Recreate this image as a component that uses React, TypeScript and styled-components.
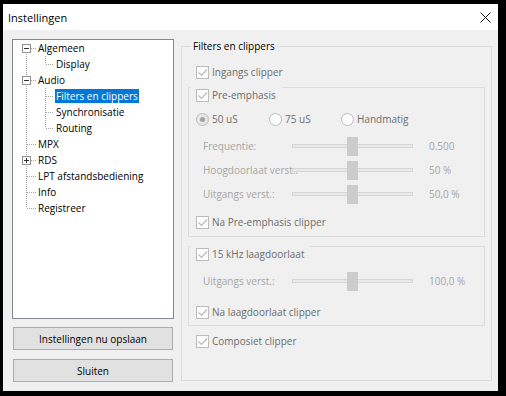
import { FC } from 'react';
import styled, { createGlobalStyle } from 'styled-components';

const Global = createGlobalStyle`
  html, body {
    margin: 0;
    padding: 0;
    background: #000;
  }
  body {
    width: 506px;
    height: 396px;
    overflow: hidden;
    font-family: "Open Sans", "Noto Sans", sans-serif;
    font-size: 10px;
  }
  * { box-sizing: border-box; }
`;

type Node = {
  label: string;
  level: 0 | 1;
  exp?: 'minus' | 'plus';
  first?: boolean;
  last?: boolean;
  lastChild?: boolean;
  selected?: boolean;
};

const tree: Node[] = [
  { label: 'Algemeen', level: 0, exp: 'minus', first: true },
  { label: 'Display', level: 1, lastChild: true },
  { label: 'Audio', level: 0, exp: 'minus' },
  { label: 'Filters en clippers', level: 1, selected: true },
  { label: 'Synchronisatie', level: 1 },
  { label: 'Routing', level: 1, lastChild: true },
  { label: 'MPX', level: 0 },
  { label: 'RDS', level: 0, exp: 'plus' },
  { label: 'LPT afstandsbediening', level: 0 },
  { label: 'Info', level: 0 },
  { label: 'Registreer', level: 0, last: true },
];

const dot = { stroke: '#a0a0a0', strokeWidth: 1, strokeDasharray: '1 1' };

const Connector: FC<{ n: Node }> = ({ n }) => {
  const w = n.level ? 41 : 23;
  return (
    <svg width={w} height={16} style={{ flex: 'none' }}>
      {n.level === 0 ? (
        <>
          <line x1={13.5} y1={n.first ? 8 : 0} x2={13.5} y2={n.last ? 8 : 16} {...dot} />
          <line x1={14} y1={8.5} x2={23} y2={8.5} {...dot} />
        </>
      ) : (
        <>
          <line x1={13.5} y1={0} x2={13.5} y2={16} {...dot} />
          <line x1={32.5} y1={0} x2={32.5} y2={n.lastChild ? 8 : 16} {...dot} />
          <line x1={33} y1={8.5} x2={41} y2={8.5} {...dot} />
        </>
      )}
      {n.exp && (
        <>
          <rect x={9.5} y={4.5} width={8} height={8} fill="#fff" stroke="#919191" />
          <line x1={11} y1={8.5} x2={16} y2={8.5} stroke="#333" />
          {n.exp === 'plus' && <line x1={13.5} y1={6} x2={13.5} y2={11} stroke="#333" />}
        </>
      )}
    </svg>
  );
};

const Slider: FC<{ label: string; value: string }> = ({ label, value }) => (
  <SliderRow>
    <SliderLabel>{label}</SliderLabel>
    <SliderTrack>
      <TrackLine />
      <Thumb />
    </SliderTrack>
    <SliderValue>{value}</SliderValue>
  </SliderRow>
);

const Check: FC<{ label: string }> = ({ label }) => (
  <>
    <Box>
      <svg width={11} height={11}>
        <polyline points="1.5,5.5 4.5,8.5 10,2.5" fill="none" stroke="#bcbcbc" strokeWidth={1.2} />
      </svg>
    </Box>
    <CheckText>{label}</CheckText>
  </>
);

const Radio: FC<{ label: string; on?: boolean; width?: number }> = ({ label, on, width }) => (
  <RadioItem $w={width}>
    <Circle $on={on}>{on && <Dot />}</Circle>
    <CheckText>{label}</CheckText>
  </RadioItem>
);

const App: FC = () => (
  <>
    <Global />
    <Window>
      <TitleBar>
        <Title>Instellingen</Title>
        <svg width={11} height={11}>
          <path d="M0.5 0.5 L10.5 10.5 M10.5 0.5 L0.5 10.5" stroke="#111" strokeWidth={1} />
        </svg>
      </TitleBar>
      <Body>
        <LeftColumn>
          <Tree>
            {tree.map((n) => (
              <TreeRow key={n.label}>
                <Connector n={n} />
                <TreeLabel $selected={n.selected}>{n.label}</TreeLabel>
              </TreeRow>
            ))}
          </Tree>
          <Button>Instellingen nu opslaan</Button>
          <Button>Sluiten</Button>
        </LeftColumn>

        <Group>
          <Legend>Filters en clippers</Legend>
          <CheckRow $top={11} $indent={8}>
            <Check label="Ingangs clipper" />
          </CheckRow>

          <SubGroup $top={7} $bottom={6}>
            <SubHeader>
              <Check label="Pre-emphasis" />
            </SubHeader>
            <RadioRow>
              <Radio label="50 uS" on width={73} />
              <Radio label="75 uS" width={72} />
              <Radio label="Handmatig" />
            </RadioRow>
            <Sliders $top={7}>
              <Slider label="Frequentie:" value="0.500" />
              <Slider label="Hoogdoorlaat verst.:" value="50 %" />
              <Slider label="Uitgangs verst.:" value="50,0 %" />
            </Sliders>
            <CheckRow $top={8} $indent={7}>
              <Check label="Na Pre-emphasis clipper" />
            </CheckRow>
          </SubGroup>

          <SubGroup $top={9} $bottom={5}>
            <SubHeader>
              <Check label="15 kHz laagdoorlaat" />
            </SubHeader>
            <Sliders $top={7}>
              <Slider label="Uitgangs verst.:" value="100,0 %" />
            </Sliders>
            <CheckRow $top={11} $indent={7}>
              <Check label="Na laagdoorlaat clipper" />
            </CheckRow>
          </SubGroup>

          <CheckRow $top={7} $indent={8}>
            <Check label="Composiet clipper" />
          </CheckRow>
        </Group>
      </Body>
    </Window>
  </>
);

const Window = styled.div`
  width: 495px;
  height: 387px;
  margin: 4px 0 0 3px;
  background: #f0f0f0;
  display: flex;
  flex-direction: column;
`;

const TitleBar = styled.div`
  height: 26px;
  flex: none;
  background: #fff;
  display: flex;
  align-items: center;
  justify-content: space-between;
  padding: 0 7px 0 5px;
`;

const Title = styled.span`
  font-size: 11px;
  color: #000;
`;

const Body = styled.div`
  flex: 1;
  display: flex;
  padding: 9px 6px 10px 9px;
  min-height: 0;
`;

const LeftColumn = styled.div`
  width: 162px;
  flex: none;
  display: flex;
  flex-direction: column;
  align-items: center;
`;

const Tree = styled.div`
  width: 162px;
  height: 280px;
  flex: none;
  background: #fff;
  border: 1px solid #828790;
  margin-bottom: 8px;
`;

const TreeRow = styled.div`
  height: 16px;
  display: flex;
  align-items: center;
`;

const TreeLabel = styled.span<{ $selected?: boolean }>`
  margin-left: 1px;
  padding: 0 1px;
  line-height: 14px;
  white-space: nowrap;
  color: ${(p) => (p.$selected ? '#fff' : '#000')};
  background: ${(p) => (p.$selected ? '#0078d7' : 'transparent')};
`;

const Button = styled.div`
  width: 160px;
  height: 23px;
  flex: none;
  margin-bottom: 9px;
  background: #e1e1e1;
  border: 1px solid #adadad;
  display: flex;
  align-items: center;
  justify-content: center;
  color: #000;
`;

const Group = styled.fieldset`
  flex: 1;
  margin: 0 0 0 7px;
  padding: 0 6px 0 6px;
  border: 1px solid #dcdcdc;
  min-width: 0;
`;

const Legend = styled.legend`
  padding: 0 2px;
  margin-left: 3px;
  line-height: 14px;
  color: #000;
`;

const CheckRow = styled.div<{ $top: number; $indent: number }>`
  height: 16px;
  margin-top: ${(p) => p.$top}px;
  padding-left: ${(p) => p.$indent}px;
  display: flex;
  align-items: center;
`;

const Box = styled.span`
  width: 13px;
  height: 13px;
  flex: none;
  border: 1px solid #bcbcbc;
  background: #fcfcfc;
  display: flex;
`;

const CheckText = styled.span`
  margin-left: 3px;
  color: #6d6d6d;
  white-space: nowrap;
`;

const SubGroup = styled.div<{ $top: number; $bottom: number }>`
  margin-top: ${(p) => p.$top}px;
  padding-bottom: ${(p) => p.$bottom}px;
  border: 1px solid #dcdcdc;
`;

const SubHeader = styled.div`
  width: fit-content;
  height: 16px;
  margin: -1px 0 0 1px;
  padding: 0 6px;
  background: #f0f0f0;
  display: flex;
  align-items: center;
`;

const RadioRow = styled.div`
  height: 16px;
  margin-top: 8px;
  padding-left: 7px;
  display: flex;
  align-items: center;
`;

const RadioItem = styled.span<{ $w?: number }>`
  display: flex;
  align-items: center;
  width: ${(p) => (p.$w ? `${p.$w}px` : 'auto')};
`;

const Circle = styled.span<{ $on?: boolean }>`
  width: 13px;
  height: 13px;
  flex: none;
  border-radius: 50%;
  border: 1px solid #bcbcbc;
  background: ${(p) => (p.$on ? '#e6e6e6' : '#fcfcfc')};
  display: flex;
  align-items: center;
  justify-content: center;
`;

const Dot = styled.span`
  width: 5px;
  height: 5px;
  border-radius: 50%;
  background: #a3a3a3;
`;

const Sliders = styled.div<{ $top: number }>`
  margin-top: ${(p) => p.$top}px;
`;

const SliderRow = styled.div`
  height: 24px;
  padding-left: 14px;
  display: flex;
  align-items: center;
`;

const SliderLabel = styled.span`
  width: 89px;
  flex: none;
  white-space: nowrap;
  color: #a6a6a6;
`;

const SliderTrack = styled.span`
  position: relative;
  width: 121px;
  height: 20px;
  flex: none;
  display: flex;
  align-items: center;
`;

const TrackLine = styled.span`
  width: 100%;
  height: 4px;
  background: #e7eaea;
  border: 1px solid #d6d6d6;
`;

const Thumb = styled.span`
  position: absolute;
  left: 55px;
  top: 1px;
  width: 11px;
  height: 19px;
  background: #cccccc;
`;

const SliderValue = styled.span`
  margin-left: 16px;
  color: #a6a6a6;
  white-space: nowrap;
`;

export default App;
